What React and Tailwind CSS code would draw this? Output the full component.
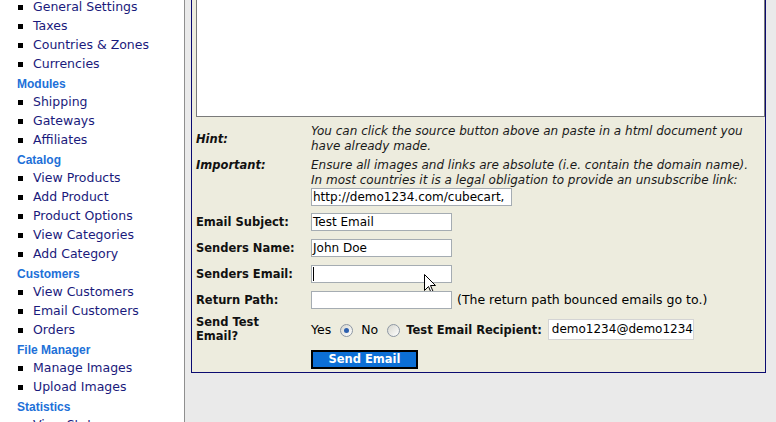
import React from 'react';

const menu = [
  ['item', 'General Settings'],
  ['item', 'Taxes'],
  ['item', 'Countries & Zones'],
  ['item', 'Currencies'],
  ['head', 'Modules'],
  ['item', 'Shipping'],
  ['item', 'Gateways'],
  ['item', 'Affiliates'],
  ['head', 'Catalog'],
  ['item', 'View Products'],
  ['item', 'Add Product'],
  ['item', 'Product Options'],
  ['item', 'View Categories'],
  ['item', 'Add Category'],
  ['head', 'Customers'],
  ['item', 'View Customers'],
  ['item', 'Email Customers'],
  ['item', 'Orders'],
  ['head', 'File Manager'],
  ['item', 'Manage Images'],
  ['item', 'Upload Images'],
  ['head', 'Statistics'],
  ['item', 'View Stats'],
];

const Radio = ({ checked }) => (
  <span className="flex h-[13px] w-[13px] shrink-0 items-center justify-center rounded-full border border-[#8d97a3] bg-gradient-to-br from-[#d6d6ce] to-white">
    {checked && <span className="h-[5px] w-[5px] rounded-full bg-[#2c5fae]" />}
  </span>
);

const Field = ({ width = 'w-[141px]', children, className = '' }) => (
  <div
    className={`relative h-[18px] ${width} overflow-visible whitespace-nowrap border border-[#a5acb2] bg-white px-[1px] text-[12px] leading-[16px] text-black ${className}`}
  >
    {children}
  </div>
);

const Label = ({ children, italic }) => (
  <div
    className={`w-[115px] shrink-0 text-[11.5px] font-bold leading-[15px] text-[#111] ${italic ? 'italic' : ''}`}
  >
    {children}
  </div>
);

export default function App() {
  return (
    <div className="flex h-[422px] w-[776px] overflow-hidden bg-[#eaeaea] font-['DejaVu_Sans',sans-serif]">
      {/* Sidebar */}
      <aside className="w-[185px] shrink-0 border-r border-[#8f8f8f] bg-white">
        <ul className="-mt-[2px]">
          {menu.map(([type, label]) =>
            type === 'head' ? (
              <li
                key={label}
                className="flex h-[19px] items-center pl-[17px] font-['Liberation_Sans',sans-serif] text-[12px] font-bold text-[#2170d8]"
              >
                {label}
              </li>
            ) : (
              <li key={label} className="flex h-[19px] items-center pl-[18px]">
                <span className="h-[5px] w-[5px] bg-black" />
                <span className="ml-[10px] whitespace-nowrap text-[12.5px] text-[#1a1a7c]">{label}</span>
              </li>
            )
          )}
        </ul>
      </aside>

      {/* Main */}
      <main className="flex-1 pl-[6px] pr-[10px]">
        <div className="border-x border-b border-[#0b0b70] bg-[#edecde] pb-[3px] pl-[4px]">
          {/* Editor area */}
          <div className="h-[117px] border-x border-b border-[#7a7a7a] bg-white" />

          {/* Hint */}
          <div className="mt-[7px] flex items-center">
            <Label italic>Hint:</Label>
            <div className="text-[12px] italic leading-[15px] text-[#1a1a1a]">
              You can click the source button above an paste in a html document you
              <br />
              have already made.
            </div>
          </div>

          {/* Important */}
          <div className="mt-[4px] flex items-start">
            <Label italic>Important:</Label>
            <div>
              <div className="whitespace-nowrap text-[12px] italic leading-[15px] text-[#1a1a1a]">
                Ensure all images and links are absolute (i.e. contain the domain name).
                <br />
                In most countries it is a legal obligation to provide an unsubscribe link:
              </div>
              <Field width="w-[201px]" className="overflow-hidden">
                http://demo1234.com/cubecart,
              </Field>
            </div>
          </div>

          {/* Text fields */}
          <div className="mt-[3px] flex h-[26px] items-center">
            <Label>Email Subject:</Label>
            <Field>Test Email</Field>
          </div>
          <div className="flex h-[26px] items-center">
            <Label>Senders Name:</Label>
            <Field>John Doe</Field>
          </div>
          <div className="flex h-[26px] items-center">
            <Label>Senders Email:</Label>
            <Field>
              <span className="mt-[1px] inline-block h-[14px] w-[1px] bg-black align-top" />
              <svg
                className="absolute left-[112px] top-[8px]"
                width="13"
                height="21"
                viewBox="0 0 13 21"
              >
                <path
                  d="M0.5 0.5 L0.5 16.5 L4.5 12.5 L7.5 19.5 L9.5 18.5 L6.5 11.5 L11.5 11.5 Z"
                  fill="white"
                  stroke="black"
                  strokeWidth="1"
                />
              </svg>
            </Field>
          </div>
          <div className="flex h-[26px] items-center">
            <Label>Return Path:</Label>
            <Field />
            <span className="ml-[5px] whitespace-nowrap text-[12.5px] text-black">
              (The return path bounced emails go to.)
            </span>
          </div>

          {/* Send test */}
          <div className="flex h-[32px] items-center">
            <div className="w-[115px] shrink-0 text-[11.5px] font-bold leading-[14px] text-[#111]">
              Send Test
              <br />
              Email?
            </div>
            <div className="flex items-center text-[12.5px] text-black">
              <span className="mt-[3px]">Yes</span>
              <span className="ml-[9px] mt-[3px]">
                <Radio checked />
              </span>
              <span className="ml-[8px] mt-[3px]">No</span>
              <span className="ml-[9px] mt-[3px]">
                <Radio />
              </span>
              <span className="ml-[6px] mt-[3px] whitespace-nowrap text-[11.5px] font-bold text-[#111]">
                Test Email Recipient:
              </span>
              <div className="ml-[6px] h-[21px] w-[146px] overflow-hidden whitespace-nowrap border border-[#d4d4d4] bg-white pl-[3px] text-[12px] leading-[19px]">
                demo1234@demo1234.com
              </div>
            </div>
          </div>

          {/* Submit */}
          <div className="mt-[5px] flex">
            <div className="w-[115px] shrink-0" />
            <button className="h-[19px] w-[107px] border-2 border-black bg-[#0c6fd6] text-[11.5px] font-bold leading-none text-white">
              Send Email
            </button>
          </div>
        </div>
      </main>
    </div>
  );
}
